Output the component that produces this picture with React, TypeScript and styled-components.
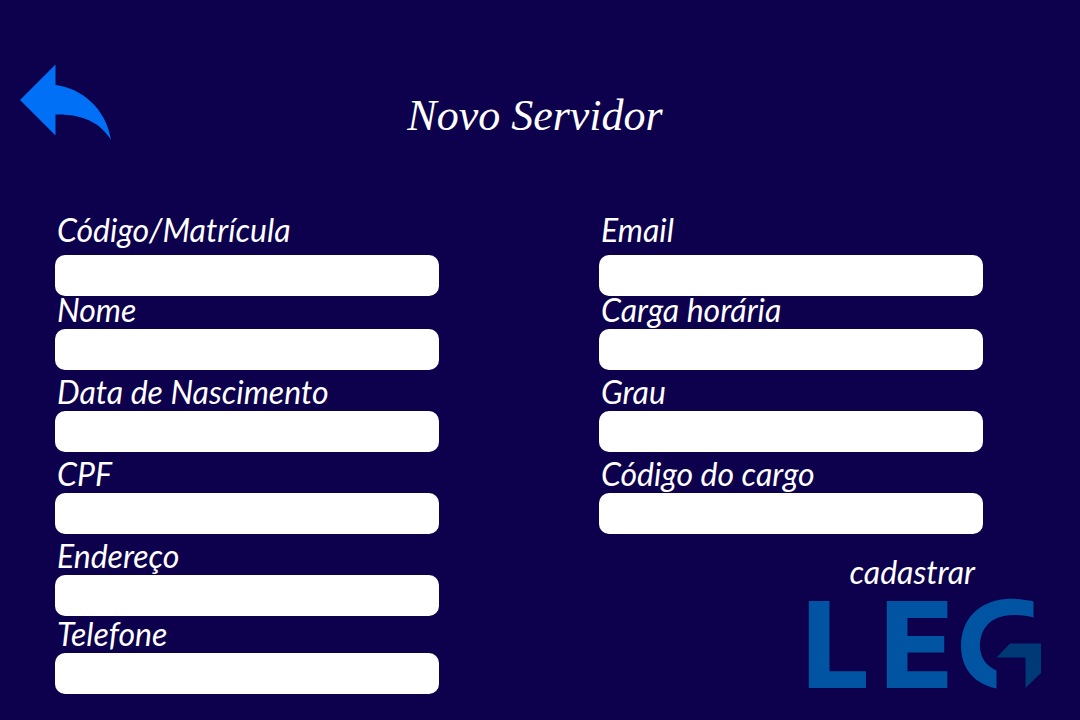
import React from "react";
import styled, { createGlobalStyle } from "styled-components";

const GlobalStyle = createGlobalStyle`
  *, *::before, *::after { box-sizing: border-box; }
  body {
    margin: 0;
    background: #0d004c;
    color: #fff;
    font-family: Lato, "Open Sans", sans-serif;
  }
`;

const Page = styled.main`
  min-height: 100vh;
  padding-top: 64px;
`;

const Header = styled.header`
  display: grid;
  grid-template-columns: 1fr auto 1fr;
  align-items: start;
  padding: 0 30px 0 20px;
`;

const BackButton = styled.button`
  justify-self: start;
  padding: 0;
  border: 0;
  background: none;
  cursor: pointer;

  svg { display: block; }
`;

const Title = styled.h1`
  margin: 24px 0 0;
  font: italic 400 44px/56px "Liberation Serif", serif;
`;

const Form = styled.form`
  display: grid;
  grid-template-columns: 1fr 1fr;
  column-gap: 160px;
  padding: 64px 97px 0 55px;
`;

const Column = styled.div`
  display: flex;
  flex-direction: column;
`;

type Space = "none" | "small" | "medium";
const spaces: Record<Space, string> = { none: "0", small: "4px", medium: "8px" };

const FieldBox = styled.div<{ $space: Space }>`
  display: flex;
  flex-direction: column;
  row-gap: 6px;
  padding-top: ${(p) => spaces[p.$space]};

  &:first-child { row-gap: 12px; }
`;

const Label = styled.label`
  padding-left: 2px;
  font-size: 32px;
  font-style: italic;
  line-height: 27px;
`;

const Input = styled.input`
  width: 100%;
  height: 41px;
  padding: 0 12px;
  border: 0;
  border-radius: 10px;
  background: #fff;
  color: #0d004c;
  font: 20px Lato, sans-serif;
`;

const Actions = styled.div`
  display: flex;
  flex-direction: column;
  align-items: flex-end;
  row-gap: 14px;
  padding-top: 24px;
`;

const SubmitButton = styled.button`
  padding: 0;
  margin-right: 8px;
  border: 0;
  background: none;
  color: inherit;
  font: italic 400 32px/27px Lato, sans-serif;
  cursor: pointer;
`;

const Logo = styled.svg`
  display: block;
  flex: none;
  margin-right: -58px;
  overflow: visible;
`;

interface FieldProps {
  id: string;
  label: string;
  type?: string;
  space?: Space;
}

function Field({ id, label, type = "text", space = "medium" }: FieldProps) {
  return (
    <FieldBox $space={space}>
      <Label htmlFor={id}>{label}</Label>
      <Input id={id} name={id} type={type} />
    </FieldBox>
  );
}

export default function App() {
  return (
    <>
      <GlobalStyle />
      <Page>
        <Header>
          <BackButton type="button" aria-label="Voltar">
            <svg width="92" height="76" viewBox="0 0 92 76" aria-hidden="true">
              <path
                fill="#0070f6"
                d="M0 36 35.500 .5V21C61 24 86 44 91 76C80 58 62 50 35.500 50.500V71.500Z"
              />
            </svg>
          </BackButton>
          <Title>Novo Servidor</Title>
        </Header>
        <Form onSubmit={(e) => e.preventDefault()}>
          <Column>
            <Field id="codigo" label="Código/Matrícula" />
            <Field id="nome" label="Nome" space="none" />
            <Field id="nascimento" label="Data de Nascimento" />
            <Field id="cpf" label="CPF" />
            <Field id="endereco" label="Endereço" />
            <Field id="telefone" label="Telefone" type="tel" space="small" />
          </Column>
          <Column>
            <Field id="email" label="Email" type="email" />
            <Field id="carga" label="Carga horária" space="none" />
            <Field id="grau" label="Grau" />
            <Field id="cargo" label="Código do cargo" />
            <Actions>
              <SubmitButton type="submit">cadastrar</SubmitButton>
              <Logo width="244" height="90" viewBox="-12 0 244 90" role="img" aria-label="LEG">
                <text
                  x="-7 71"
                  y="89"
                  fill="#0054a2"
                  fontFamily="Inter, sans-serif"
                  fontWeight="800"
                  fontSize="120"
                >
                  LE
                </text>
                <path
                  fill="#0054a2"
                  d="M224.500 2.500V18.500C216 16.500 204 15 195 17C180 20 171 31 171 47C171 58 177 67 187.500 71.500V89.500C165 85 152 69 152 47C152 20 170 2 197 0C206 -.5 216 .5 224.500 2.500Z"
                />
                <path fill="#003a76" d="M187.500 58.500 201 44.500H232V74L216.500 89V58.500Z" />
              </Logo>
            </Actions>
          </Column>
        </Form>
      </Page>
    </>
  );
}
